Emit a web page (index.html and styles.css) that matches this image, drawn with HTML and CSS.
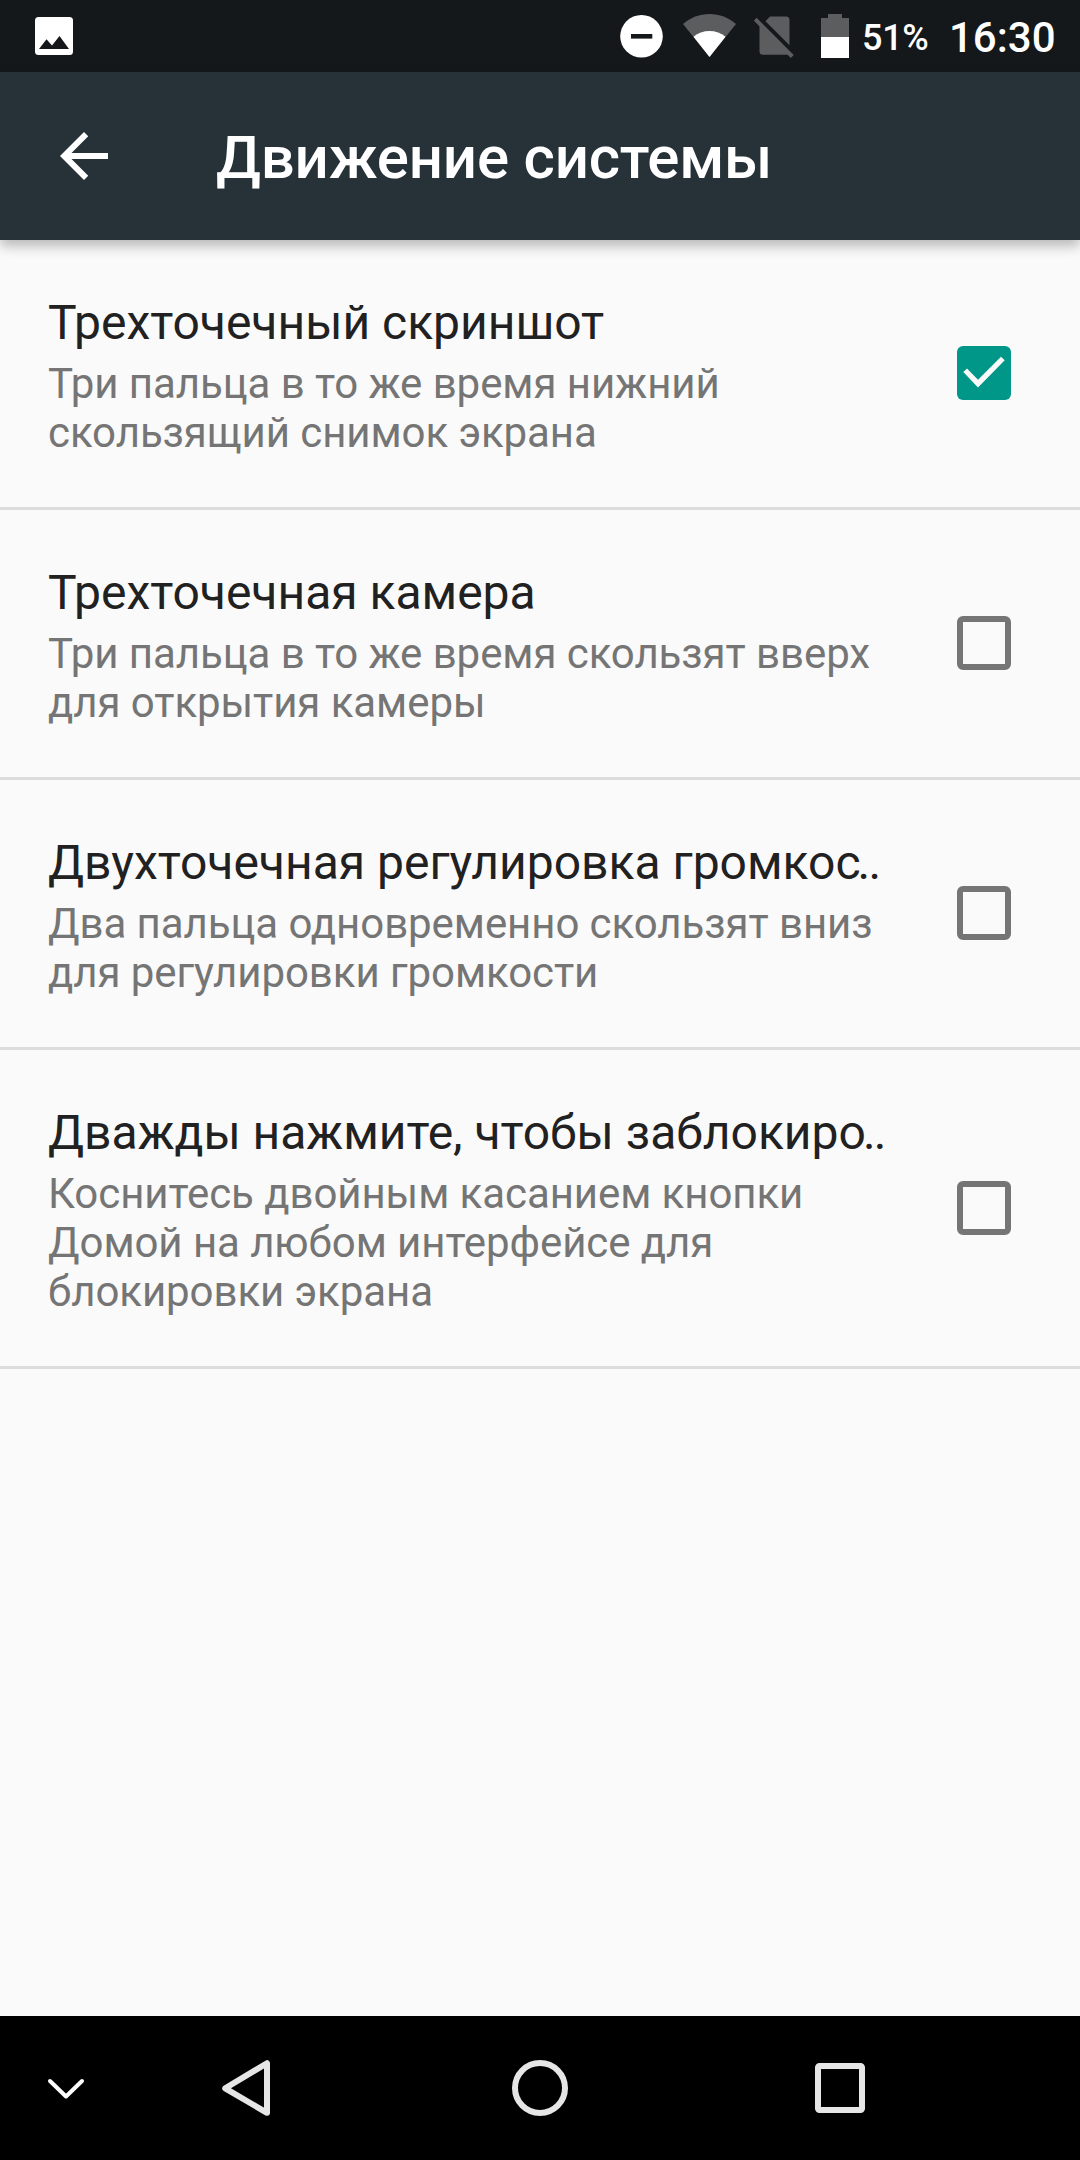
FILE: index.html
```html
<!DOCTYPE html>
<html lang="ru">
<head>
    <meta charset="UTF-8">
    <meta name="viewport" content="width=device-width, initial-scale=1.0">
    <title>Движение системы</title>
    <link rel="stylesheet" href="styles.css">
</head>
<body>

<div class="status-bar">
    <svg class="icon-photo" width="38" height="38" viewBox="0 0 38 38">
        <rect width="38" height="38" rx="3.5" fill="#fff"/>
        <path d="M4 32L11.5 22.3L17 28.5L24.5 19L34 32z" fill="#14181b"/>
    </svg>
    <div class="status-icons">
        <svg class="icon-dnd" width="44" height="72" viewBox="0 0 44 72">
            <circle cx="21.5" cy="36.3" r="21.3" fill="#fff"/>
            <rect x="11" y="34" width="21.3" height="4.6" fill="#14181b"/>
        </svg>
        <svg class="icon-wifi" width="54" height="72" viewBox="0 0 54 72">
            <path d="M26.5 57L0 24C7.5 17.5 16.5 14 26.5 14S45.5 17.5 53 24z" fill="#5b5d5f"/>
            <path d="M26.5 57L10.5 36.7C15 33 20.5 31 26.5 31S38 33 42.5 36.7z" fill="#fff"/>
        </svg>
        <svg class="icon-sim" width="40" height="72" viewBox="0 0 40 72">
            <path d="M11.5 21.2L16 16.5H32a3.5 3.5 0 0 1 3.5 3.5V45.3zM5.5 24V51.3a3.5 3.5 0 0 0 3.5 3.5H36z" fill="#5b5d5f"/>
            <path d="M1.2 19.2L38.3 56.5" stroke="#5b5d5f" stroke-width="4"/>
        </svg>
        <svg class="icon-battery" width="28" height="72" viewBox="0 0 28 72">
            <path d="M0 18H7V14H21V18H28V37H0z" fill="#5b5d5f"/>
            <rect y="37" width="28" height="21" fill="#fff"/>
        </svg>
        <span class="battery-level">51%</span>
        <span class="clock">16:30</span>
    </div>
</div>

<div class="app-bar">
    <svg width="72" height="72" viewBox="0 0 24 24">
        <path d="M20 11H7.83l5.59-5.59L12 4l-8 8 8 8 1.41-1.41L7.83 13H20v-2z" fill="#fff"/>
    </svg>
    <h1>Движение системы</h1>
</div>

<div class="settings">
    <div class="item">
        <div class="item-text">
            <div class="item-title">Трехточечный скриншот</div>
            <div class="item-summary">Три пальца в то же время нижний<br>скользящий снимок экрана</div>
        </div>
        <div class="checkbox checked">
            <svg width="54" height="54" viewBox="0 0 54 54">
                <path d="M6.3 26L10 22.5L21 33.7L44 10.7L47.7 14.3L21 41.5z" fill="#fafafa"/>
            </svg>
        </div>
    </div>
    <div class="item">
        <div class="item-text">
            <div class="item-title">Трехточечная камера</div>
            <div class="item-summary">Три пальца в то же время скользят вверх<br>для открытия камеры</div>
        </div>
        <div class="checkbox"></div>
    </div>
    <div class="item">
        <div class="item-text">
            <div class="item-title">Двухточечная регулировка громкос<span class="dots">..</span></div>
            <div class="item-summary">Два пальца одновременно скользят вниз<br>для регулировки громкости</div>
        </div>
        <div class="checkbox"></div>
    </div>
    <div class="item">
        <div class="item-text">
            <div class="item-title">Дважды нажмите, чтобы заблокиро<span class="dots">..</span></div>
            <div class="item-summary">Коснитесь двойным касанием кнопки<br>Домой на любом интерфейсе для<br>блокировки экрана</div>
        </div>
        <div class="checkbox"></div>
    </div>
</div>

<div class="nav-bar">
    <div class="nav-hide">
        <svg width="40" height="24" viewBox="0 0 40 24">
            <path d="M4 5L20 20.5L36 5" fill="none" stroke="#fff" stroke-width="4" stroke-linecap="round" stroke-linejoin="round"/>
        </svg>
    </div>
    <div class="nav-button">
        <svg width="72" height="72" viewBox="0 0 72 72">
            <path d="M63 11.2V60.8L21.2 36.3z" fill="none" stroke="#e6e6e6" stroke-width="6" stroke-linejoin="round"/>
        </svg>
    </div>
    <div class="nav-button">
        <svg width="72" height="72" viewBox="0 0 72 72">
            <circle cx="36" cy="36" r="25" fill="none" stroke="#e6e6e6" stroke-width="6"/>
        </svg>
    </div>
    <div class="nav-button">
        <svg width="72" height="72" viewBox="0 0 72 72">
            <rect x="14" y="14" width="44" height="44" rx="1.5" fill="none" stroke="#e6e6e6" stroke-width="6"/>
        </svg>
    </div>
</div>

</body>
</html>
```
FILE: styles.css
```css
* {
    box-sizing: border-box;
}
body {
    font-family: Roboto, 'Noto Sans', sans-serif;
    background-color: #fafafa;
    margin: 0;
    height: 2160px;
    display: flex;
    flex-direction: column;
    overflow: hidden;
}
svg {
    display: block;
    flex: none;
}
.status-bar {
    height: 72px;
    flex: none;
    background: #14181b;
    color: #fff;
    display: flex;
    align-items: center;
    justify-content: space-between;
    padding: 0 25px 0 35px;
}
.status-icons {
    display: flex;
    align-items: center;
    font-weight: 500;
    white-space: nowrap;
}
.icon-dnd {
    margin-right: 19px;
}
.icon-wifi {
    margin-right: 17px;
}
.icon-sim {
    margin-right: 27px;
}
.icon-battery {
    margin-right: 13px;
}
.battery-level {
    width: 87px;
    font-size: 36px;
    line-height: 42px;
    letter-spacing: -0.3px;
    padding-top: 4px;
}
.clock {
    width: 106px;
    font-size: 42px;
    line-height: 50px;
    padding-top: 4px;
}
.app-bar {
    height: 168px;
    flex: none;
    background: #263238;
    display: flex;
    align-items: center;
    padding-left: 48px;
    gap: 96px;
    box-shadow: 0 6px 12px rgba(0,0,0,0.27);
}
.app-bar h1 {
    margin: 0;
    color: #fff;
    font-size: 60px;
    font-weight: 500;
    line-height: 70px;
    letter-spacing: -0.2px;
    padding-top: 4px;
    white-space: nowrap;
}
.settings {
    flex: 1;
}
.item {
    display: flex;
    align-items: center;
    justify-content: space-between;
    padding: 0 69px 0 48px;
    border-bottom: 3px solid #dcdcdc;
}
.item-text {
    padding: 55px 0 50px;
    white-space: nowrap;
}
.item-title {
    font-size: 48px;
    line-height: 56px;
    color: #212121;
    margin-bottom: 8px;
}
.dots {
    margin-left: -3px;
    letter-spacing: -1.7px;
}
.item-summary {
    font-size: 42px;
    line-height: 49px;
    letter-spacing: -0.07px;
    color: #757575;
}
.checkbox {
    width: 54px;
    height: 54px;
    margin-bottom: 1px;
    border: 6px solid #757575;
    border-radius: 6px;
}
.checkbox.checked {
    border: none;
    background: #009688;
}
.nav-bar {
    height: 144px;
    flex: none;
    background: #000;
    display: flex;
    align-items: center;
}
.nav-hide {
    width: 90px;
    padding-left: 46px;
}
.nav-button {
    width: 300px;
    display: flex;
    justify-content: center;
}
```
